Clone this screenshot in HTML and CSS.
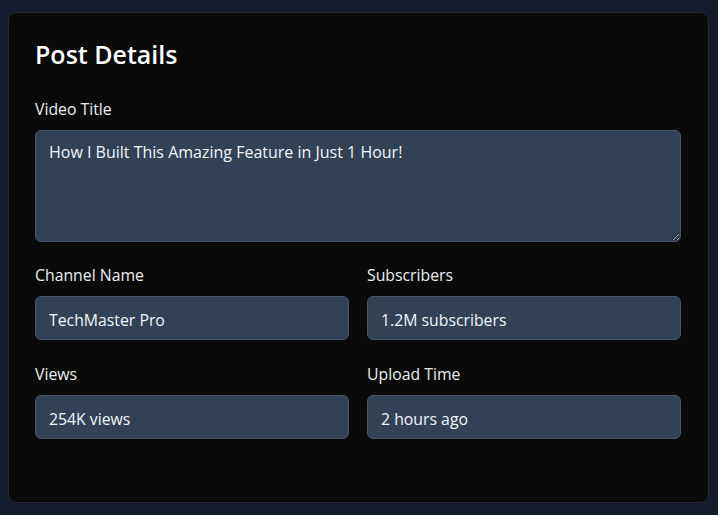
FILE: index.html
```html
<!DOCTYPE html>
<html>
<head>
<meta charset="utf-8">
<link rel="stylesheet" href="styles.css">
</head>
<body>
<div class="card">
  <h2 class="title">Post Details</h2>
  <div class="field">
    <label class="label">Video Title</label>
    <textarea class="control area">How I Built This Amazing Feature in Just 1 Hour!</textarea>
  </div>
  <div class="row">
    <div class="field">
      <label class="label">Channel Name</label>
      <input class="control" type="text" value="TechMaster Pro">
    </div>
    <div class="field">
      <label class="label">Subscribers</label>
      <input class="control" type="text" value="1.2M subscribers">
    </div>
  </div>
  <div class="row">
    <div class="field">
      <label class="label">Views</label>
      <input class="control" type="text" value="254K views">
    </div>
    <div class="field">
      <label class="label">Upload Time</label>
      <input class="control" type="text" value="2 hours ago">
    </div>
  </div>
</div>
</body>
</html>
```
FILE: styles.css
```css
html, body {
  margin: 0;
  background: #121a2b;
  font-family: "Open Sans", "Noto Sans", sans-serif;
}
body {
  padding: 12px 9px 12px 8px;
}
.card {
  background: #0a0a0a;
  border: 1px solid #25282d;
  border-radius: 8px;
  height: 491px;
  box-sizing: border-box;
  padding: 0 27px 0 26px;
  display: flex;
  flex-direction: column;
}
.title {
  margin: 23px 0 26px;
  font-size: 25px;
  line-height: 36px;
  font-weight: 600;
  color: #ffffff;
}
.field {
  display: flex;
  flex-direction: column;
  min-width: 0;
}
.label {
  font-size: 15.8px;
  line-height: 20px;
  font-weight: 500;
  color: #ebedf0;
  margin-top: 1px;
  margin-bottom: 11px;
}
.control {
  box-sizing: border-box;
  width: 100%;
  height: 44px;
  margin: 0;
  background: #334155;
  border: 1px solid #475569;
  border-radius: 6px;
  padding: 4px 13px 0;
  color: #f1f5f9;
  font-family: inherit;
  font-size: 15.8px;
  outline: none;
}
.area {
  height: 112px;
  padding: 10px 13px;
  line-height: 22px;
  font-size: 16px;
  resize: vertical;
  display: block;
}
.row {
  display: grid;
  grid-template-columns: 1fr 1fr;
  column-gap: 18px;
  margin-top: 22px;
}
.row + .row {
  margin-top: 23px;
}
```
